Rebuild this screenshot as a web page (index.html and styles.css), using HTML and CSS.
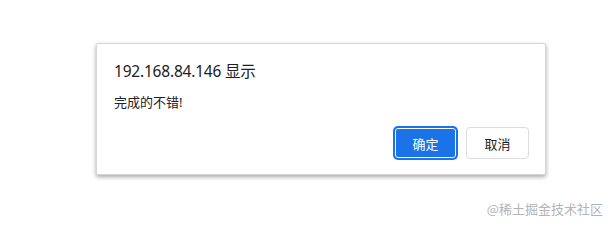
FILE: index.html
```html
<!DOCTYPE html>
<html lang="zh-CN">
<head>
<meta charset="utf-8">
<title>alert</title>
<link rel="stylesheet" href="styles.css">
</head>
<body>
<div class="page">
  <div class="dialog">
    <div class="title">192.168.84.146 显示</div>
    <div class="message">完成的不错!</div>
    <div class="actions">
      <button class="btn btn-primary">确定</button>
      <button class="btn btn-secondary">取消</button>
    </div>
  </div>
  <div class="watermark">@稀土掘金技术社区</div>
</div>
</body>
</html>
```

FILE: styles.css
```css
html, body {
  margin: 0;
  padding: 0;
  background: #ffffff;
}
body {
  font-family: "Noto Sans", "Noto Sans CJK SC", sans-serif;
  color: #202124;
}
.page {
  position: relative;
  width: 615px;
  height: 227px;
  padding: 43px 0 0 96px;
  box-sizing: border-box;
}
.dialog {
  width: 450px;
  box-sizing: border-box;
  border: 1px solid #d6d6d6;
  border-radius: 2px;
  background: #fff;
  box-shadow: 0 2px 4px rgba(0, 0, 0, 0.35);
  padding: 17px 16px 15px 17px;
  display: flex;
  flex-direction: column;
}
.title {
  font-size: 15.5px;
  line-height: 20px;
  letter-spacing: -0.2px;
  color: #202124;
}
.message {
  margin-top: 12px;
  font-size: 13px;
  line-height: 18px;
  color: #202124;
}
.actions {
  margin-top: 16px;
  display: flex;
  justify-content: flex-end;
  gap: 9px;
}
.btn {
  width: 63px;
  height: 32px;
  box-sizing: border-box;
  border-radius: 4px;
  font-family: "Noto Sans CJK SC", sans-serif;
  font-size: 13px;
  padding: 0;
  cursor: pointer;
}
.btn-primary {
  background: #1a73e8;
  color: #fff;
  border: 1px solid #1a73e8;
  box-shadow: 0 0 0 1px #1a73e8, inset 0 0 0 1px #ffffff;
}
.btn-secondary {
  background: #fff;
  color: #202124;
  border: 1px solid #dadce0;
}
.watermark {
  position: absolute;
  right: 12px;
  bottom: 9px;
  font-family: "Noto Sans CJK SC", sans-serif;
  font-size: 13px;
  line-height: 18px;
  color: #b4b4b4;
}
```
